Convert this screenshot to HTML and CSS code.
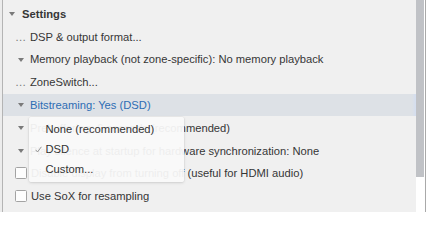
FILE: index.html
```html
<!DOCTYPE html>
<html>
<head>
<meta charset="utf-8">
<link rel="stylesheet" href="styles.css">
</head>
<body>
<div class="window">
  <div class="list">
    <div class="row level0"><span class="mark"><span class="tri"></span></span><span class="label bold">Settings</span></div>
    <div class="row level1"><span class="mark dots">…</span><span class="label">DSP &amp; output format...</span></div>
    <div class="row level1"><span class="mark"><span class="tri"></span></span><span class="label">Memory playback (not zone-specific): No memory playback</span></div>
    <div class="row level1"><span class="mark dots">…</span><span class="label">ZoneSwitch...</span></div>
    <div class="row level1 selected"><span class="mark"><span class="tri"></span></span><span class="label blue">Bitstreaming: Yes (DSD)</span></div>
    <div class="row level1"><span class="mark"><span class="tri"></span></span><span class="label">Prebuffering: 6 seconds (recommended)</span></div>
    <div class="row level1"><span class="mark"><span class="tri"></span></span><span class="label">Play silence at startup for hardware synchronization: None</span></div>
    <div class="row level1"><span class="mark"><span class="box"></span></span><span class="label chk">Disable display from turning off (useful for HDMI audio)</span></div>
    <div class="row level1"><span class="mark"><span class="box"></span></span><span class="label chk">Use SoX for resampling</span></div>
  </div>
  <div class="scroll"><div class="thumb"></div></div>
  <div class="gap"></div>
  <div class="rline"></div>
  <div class="rest"></div>

  <div class="menu">
    <div class="item">None (recommended)</div>
    <div class="item"><svg class="check" width="7" height="7" viewBox="0 0 7 7"><polyline points="0.6,3.8 2.5,6 6.4,0.8" fill="none" stroke="#8a8a8a" stroke-width="0.9"/></svg>DSD</div>
    <div class="item">Custom...</div>
  </div>
</div>
</body>
</html>
```

FILE: styles.css
```css
html, body {
  margin: 0;
  padding: 0;
}
body {
  width: 430px;
  height: 212px;
  overflow: hidden;
  background: #ffffff;
  font-family: "Liberation Sans", Arial, Helvetica, sans-serif;
  font-size: 11.2px;
  color: #363636;
}
.window {
  position: relative;
  display: flex;
  height: 212px;
}
.list {
  width: 413px;
  margin-left: 2px;
  border-left: 1px solid #b4b4b4;
  background: #f0f0f0;
  padding-top: 2.4px;
  box-shadow: -2px 0 0 #ececec;
}
.row {
  height: 22.8px;
  display: flex;
  align-items: center;
  white-space: nowrap;
}
.level0 { padding-left: 4px; }
.level0 .mark { width: 10px; margin-right: 5px; }
.level1 { padding-left: 12px; }
.level1 .mark { width: 12px; margin-right: 3px; }
.mark {
  display: flex;
  align-items: center;
  justify-content: center;
  height: 12px;
}
.mark.dots {
  justify-content: flex-start;
  color: #777777;
  line-height: 12px;
}
.tri {
  width: 0;
  height: 0;
  border-left: 3px solid transparent;
  border-right: 3px solid transparent;
  border-top: 4px solid #7a7a7a;
  margin-right: 1px;
  margin-top: 1px;
}
.box {
  border: 1px solid #a3a3a3;
  border-radius: 1.5px;
  background: #fdfdfd;
  box-sizing: border-box;
  width: 12px;
  height: 12px;
}
.label.chk { margin-left: 1px; }
.bold { font-weight: bold; color: #363636; }
.blue { color: #2d6db4; }
.selected {
  background: linear-gradient(to right, #dde1e6 0, #dde1e6 409px, #d4def0 413px);
}
.scroll {
  width: 8px;
  background: #ffffff;
}
.thumb {
  height: 177px;
  background: #c0c2c6;
}
.gap { width: 1px; background: #ffffff; }
.rline { width: 1px; background: #a9a9a9; }
.rest { flex: 1; background: #ffffff; }

.menu {
  position: absolute;
  left: 29px;
  top: 117px;
  width: 155px;
  height: 65px;
  box-sizing: border-box;
  padding-top: 2px;
  background: rgba(249, 249, 249, 0.94);
  box-shadow: 0 1px 3px rgba(0, 0, 0, 0.12), 0 0 0 0.5px rgba(0, 0, 0, 0.05);
  border-radius: 2px;
  color: #333333;
}
.item {
  position: relative;
  height: 20px;
  line-height: 20px;
  padding-left: 16.5px;
}
.check {
  position: absolute;
  left: 6px;
  top: 7px;
}
```
